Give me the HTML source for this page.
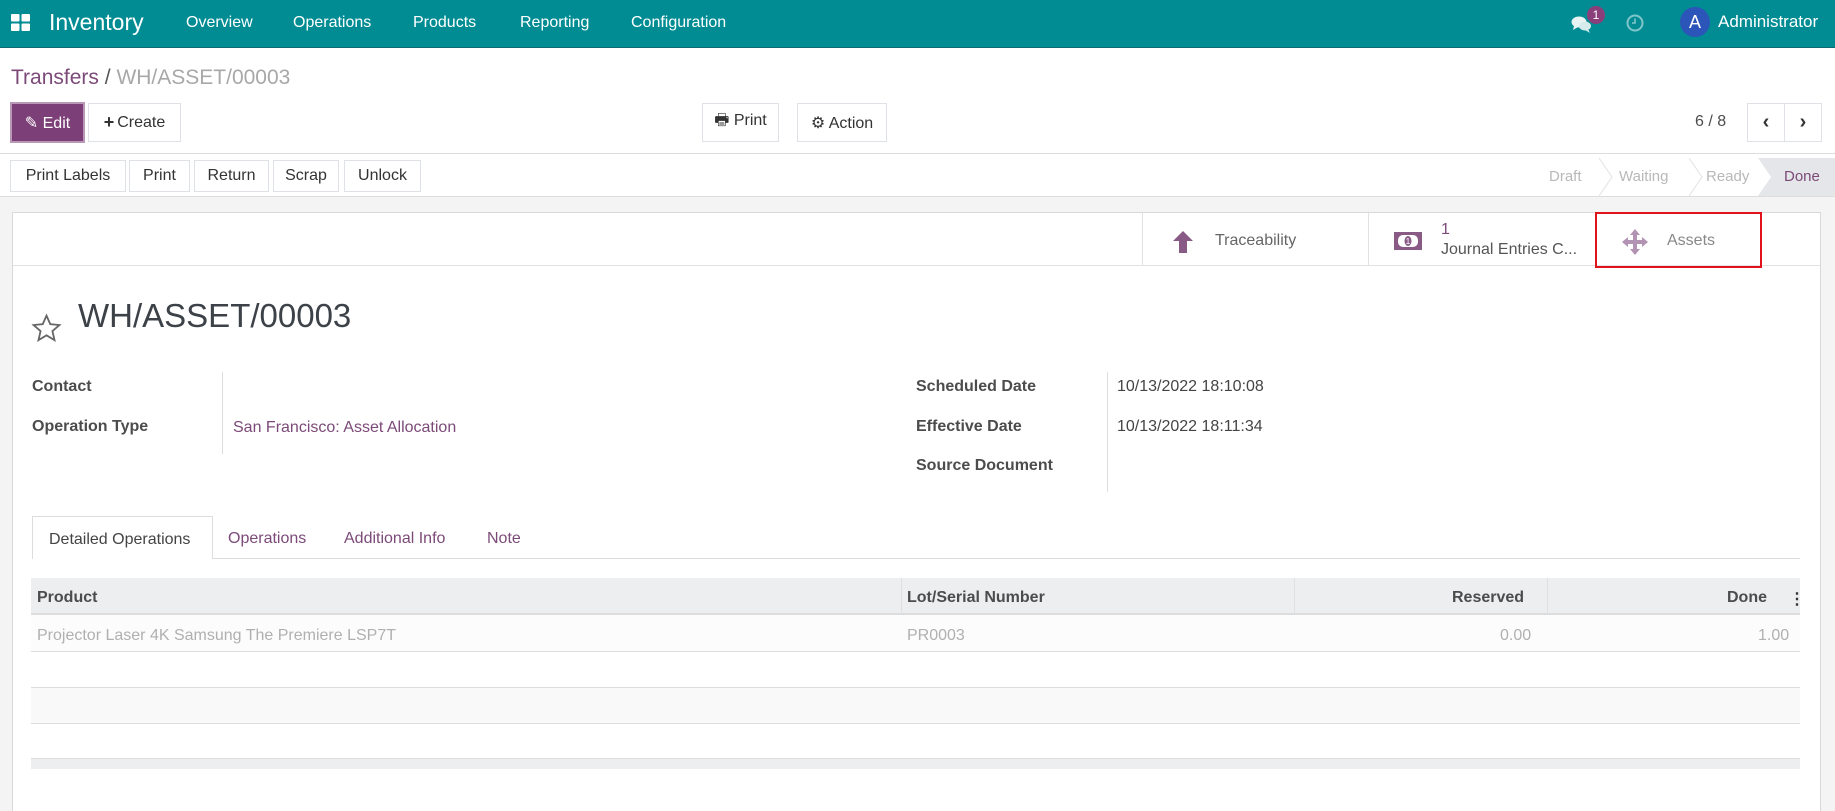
<!DOCTYPE html>
<html><head><meta charset="utf-8"><style>
*{box-sizing:border-box;margin:0;padding:0}
html{width:1835px;height:811px;overflow:hidden}
body{width:1835px;height:811px;overflow:hidden;position:relative;font-family:"Liberation Sans",sans-serif;color:#4c4c4c;background:#fff;font-size:16px}
.a{position:absolute;white-space:nowrap}
.nav{left:0;top:0;width:1835px;height:48px;background:#018c94;border-bottom:1px solid #0b6b70}
.nav .m{color:#fff;font-size:16px;top:13px}
.btn{position:absolute;border:1px solid #dee2e6;background:#fff;color:#333;font-size:16px;display:flex;align-items:center;justify-content:center}
.pur{color:#7c4a78}
.lbl{font-weight:bold;color:#4c4c4c;font-size:16px}
.grey{color:#b0b0b0}
</style></head><body>
<div class="a nav">
  <svg class="a" style="left:11px;top:14px" width="20" height="18" viewBox="0 0 20 18"><rect x="0" y="0" width="8.5" height="7.5" rx="1" fill="#fff"/><rect x="10.5" y="0" width="8.5" height="7.5" rx="1" fill="#fff"/><rect x="0" y="9.5" width="8.5" height="7.5" rx="1" fill="#fff"/><rect x="10.5" y="9.5" width="8.5" height="7.5" rx="1" fill="#fff"/></svg>
  <div class="a" style="left:49px;top:9px;font-size:23px;color:#fff">Inventory</div>
  <div class="a m" style="left:186px;top:14px">Overview</div>
  <div class="a m" style="left:293px;top:14px">Operations</div>
  <div class="a m" style="left:413px;top:14px">Products</div>
  <div class="a m" style="left:520px;top:14px">Reporting</div>
  <div class="a m" style="left:631px;top:14px">Configuration</div>
  <svg class="a" style="left:1571px;top:14px" width="22" height="20" viewBox="0 0 22 20"><ellipse cx="8" cy="8" rx="7.5" ry="5.5" fill="#e8f4f4"/><path d="M3 12 L2 16 L7 13Z" fill="#e8f4f4"/><ellipse cx="14" cy="12" rx="6" ry="4.5" fill="#d6ecec"/><path d="M17 15 L19 19 L14 16Z" fill="#d6ecec"/></svg>
  <div class="a" style="left:1587px;top:6px;width:18px;height:18px;border-radius:9px;background:#8a3f7a;color:#fff;font-size:12px;text-align:center;line-height:18px">1</div>
  <svg class="a" style="left:1626px;top:14px" width="18" height="18" viewBox="0 0 18 18"><circle cx="9" cy="9" r="7.5" fill="none" stroke="#7fc6ca" stroke-width="2"/><path d="M9 4.5V9H6" fill="none" stroke="#7fc6ca" stroke-width="1.6"/></svg>
  <div class="a" style="left:1680px;top:7px;width:30px;height:30px;border-radius:15px;background:#2b55b8;color:#fff;font-size:18px;text-align:center;line-height:30px">A</div>
  <div class="a" style="left:1718px;top:12px;color:#fff;font-size:17px">Administrator</div>
</div>

<div class="a" style="left:11px;top:66px;font-size:21px"><span class="pur">Transfers</span><span style="color:#555"> / </span><span style="color:#a8a8a8">WH/ASSET/00003</span></div>

<div class="btn" style="left:10px;top:102px;width:75px;height:41px;background:#7c3f78;color:#fff;border:2px solid #b898b6">✎ Edit</div>
<div class="btn" style="left:88px;top:103px;width:93px;height:39px"><b style="font-size:18px;margin-right:3px">+</b>Create</div>
<div class="btn" style="left:702px;top:103px;width:77px;height:39px">🖶 Print</div>
<div class="btn" style="left:797px;top:103px;width:90px;height:39px">⚙ Action</div>
<div class="a" style="left:1695px;top:113px">6 / 8</div>
<div class="btn" style="left:1747px;top:103px;width:38px;height:39px;font-weight:bold;font-size:20px">‹</div>
<div class="btn" style="left:1784px;top:103px;width:38px;height:39px;font-weight:bold;font-size:20px">›</div>

<div class="a" style="left:0;top:153px;width:1835px;height:1px;background:#dcdcdc"></div>
<div class="btn" style="left:10px;top:160px;width:116px;height:32px">Print Labels</div>
<div class="btn" style="left:129px;top:160px;width:61px;height:32px">Print</div>
<div class="btn" style="left:194px;top:160px;width:75px;height:32px">Return</div>
<div class="btn" style="left:273px;top:160px;width:66px;height:32px">Scrap</div>
<div class="btn" style="left:344px;top:160px;width:77px;height:32px">Unlock</div>
<svg class="a" style="left:1520px;top:158px" width="315" height="38"><path d="M1758 0 L1835 0 L1835 38 L1758 38 L1771 19Z" transform="translate(-1520 0)" fill="#e4e6ea"/><path d="M79 0 L92 19 L79 38 M169 0 L182 19 L169 38" fill="none" stroke="#e2e2e2"/></svg>
<div class="a" style="left:1549px;top:168px;color:#b8b8b8;font-size:15px">Draft</div>
<div class="a" style="left:1619px;top:168px;color:#b8b8b8;font-size:15px">Waiting</div>
<div class="a" style="left:1706px;top:168px;color:#b8b8b8;font-size:15px">Ready</div>
<div class="a pur" style="left:1784px;top:168px;font-size:15px">Done</div>

<div class="a" style="left:0;top:196px;width:1835px;height:615px;background:#f4f4f4;border-top:1px solid #ddd"></div>
<div class="a" style="left:12px;top:212px;width:1809px;height:599px;background:#fff;border:1px solid #d8d8d8;border-bottom:none"></div>
<div class="a" style="left:13px;top:265px;width:1807px;height:1px;background:#e2e2e2"></div>
<div class="a" style="left:1142px;top:213px;width:1px;height:52px;background:#e2e2e2"></div>
<div class="a" style="left:1368px;top:213px;width:1px;height:52px;background:#e2e2e2"></div>
<svg class="a" style="left:1172px;top:230px" width="22" height="24" viewBox="0 0 22 24"><path d="M11 1 L21 11 L15 11 L15 23 L7 23 L7 11 L1 11Z" fill="#8a5a86"/></svg>
<div class="a" style="left:1215px;top:232px;color:#666;font-size:16px">Traceability</div>
<svg class="a" style="left:1393px;top:231px" width="30" height="20" viewBox="0 0 30 20"><rect x="1" y="1" width="28" height="18" fill="#8a5a86"/><rect x="5" y="4" width="20" height="12" rx="5" fill="#fff"/><ellipse cx="15" cy="10" rx="3.5" ry="5" fill="#8a5a86"/><text x="15" y="13" font-size="8" fill="#fff" text-anchor="middle" font-family="Liberation Sans">1</text></svg>
<div class="a pur" style="left:1441px;top:221px;font-size:16px">1</div>
<div class="a" style="left:1441px;top:241px;color:#555;font-size:16px">Journal Entries C...</div>
<div class="a" style="left:1595px;top:212px;width:167px;height:56px;border:2px solid #e0121b"></div>
<svg class="a" style="left:1621px;top:228px" width="28" height="28" viewBox="0 0 28 28"><path d="M14 1 L19 7 L16 7 L16 12 L21 12 L21 9 L27 14 L21 19 L21 16 L16 16 L16 21 L19 21 L14 27 L9 21 L12 21 L12 16 L7 16 L7 19 L1 14 L7 9 L7 12 L12 12 L12 7 L9 7Z" fill="#b393b3"/></svg>
<div class="a" style="left:1667px;top:232px;color:#888;font-size:16px">Assets</div>

<svg class="a" style="left:31px;top:313px" width="31" height="31" viewBox="0 0 24 24"><path d="M12 2 L14.9 8.6 L22 9.3 L16.6 14 L18.2 21 L12 17.3 L5.8 21 L7.4 14 L2 9.3 L9.1 8.6Z" fill="none" stroke="#666" stroke-width="1.4"/></svg>
<div class="a" style="left:78px;top:297px;font-size:33px;color:#3c4248">WH/ASSET/00003</div>

<div class="a lbl" style="left:32px;top:378px">Contact</div>
<div class="a lbl" style="left:32px;top:418px">Operation Type</div>
<div class="a" style="left:222px;top:372px;width:1px;height:82px;background:#ddd"></div>
<div class="a pur" style="left:233px;top:419px">San Francisco: Asset Allocation</div>
<div class="a lbl" style="left:916px;top:378px">Scheduled Date</div>
<div class="a lbl" style="left:916px;top:418px">Effective Date</div>
<div class="a lbl" style="left:916px;top:457px">Source Document</div>
<div class="a" style="left:1107px;top:372px;width:1px;height:120px;background:#ddd"></div>
<div class="a" style="left:1117px;top:378px;color:#444">10/13/2022 18:10:08</div>
<div class="a" style="left:1117px;top:418px;color:#444">10/13/2022 18:11:34</div>

<div class="a" style="left:32px;top:558px;width:1768px;height:1px;background:#ddd"></div>
<div class="a" style="left:32px;top:516px;width:181px;height:43px;background:#fff;border:1px solid #ddd;border-bottom:none;padding:14px 0 0 16px;color:#444">Detailed Operations</div>
<div class="a pur" style="left:228px;top:530px">Operations</div>
<div class="a pur" style="left:344px;top:530px">Additional Info</div>
<div class="a pur" style="left:487px;top:530px">Note</div>

<div class="a" style="left:31px;top:578px;width:1769px;height:37px;background:#eceeef;border-bottom:2px solid #ddd"></div>
<div class="a" style="left:901px;top:578px;width:1px;height:37px;background:#e0e0e0"></div>
<div class="a" style="left:1294px;top:578px;width:1px;height:37px;background:#e0e0e0"></div>
<div class="a" style="left:1547px;top:578px;width:1px;height:37px;background:#e0e0e0"></div>
<div class="a lbl" style="left:37px;top:589px">Product</div>
<div class="a lbl" style="left:907px;top:589px">Lot/Serial Number</div>
<div class="a lbl" style="left:1452px;top:589px">Reserved</div>
<div class="a lbl" style="left:1727px;top:589px">Done</div>
<div class="a" style="left:1789px;top:589px;font-weight:bold;color:#333">⋮</div>
<div class="a" style="left:31px;top:615px;width:1769px;height:37px;background:#fcfcfc;border-bottom:1px solid #ddd"></div>
<div class="a grey" style="left:37px;top:627px">Projector Laser 4K Samsung The Premiere LSP7T</div>
<div class="a grey" style="left:907px;top:627px">PR0003</div>
<div class="a grey" style="left:1500px;top:627px">0.00</div>
<div class="a grey" style="left:1758px;top:627px">1.00</div>
<div class="a" style="left:31px;top:652px;width:1769px;height:36px;border-bottom:1px solid #ddd"></div>
<div class="a" style="left:31px;top:688px;width:1769px;height:36px;background:#f9f9f9;border-bottom:1px solid #ddd"></div>
<div class="a" style="left:31px;top:724px;width:1769px;height:35px;border-bottom:1px solid #ddd"></div>
<div class="a" style="left:31px;top:759px;width:1769px;height:10px;background:#eceeef"></div>
</body></html>
